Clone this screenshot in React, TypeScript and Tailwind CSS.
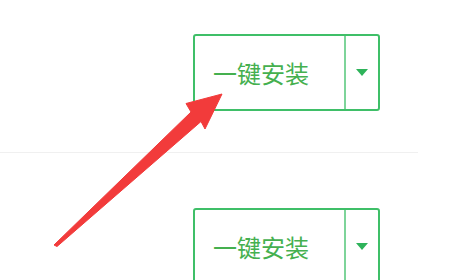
import React from "react";

function InstallButton() {
  return (
    <div className="flex h-[77px] w-[187px] rounded-[3px] border-2 border-[#3fbf68] bg-white">
      <div className="flex w-[149px] items-center pl-[18px]">
        <span
          className="text-[24px] leading-none text-[#45b04f]"
          style={{ fontFamily: '"Noto Sans CJK SC", "Noto Sans", sans-serif' }}
        >
          一键安装
        </span>
      </div>
      <div className="flex flex-1 items-center justify-center border-l-2 border-[#7ed49a]">
        <div className="h-0 w-0 border-x-[6px] border-t-[7px] border-x-transparent border-t-[#2eb35a]" />
      </div>
    </div>
  );
}

export default function App() {
  return (
    <div className="relative h-[280px] w-[450px] overflow-hidden bg-white">
      <div className="flex flex-col">
        <div className="flex justify-end pr-[70px] pt-[34px]">
          <InstallButton />
        </div>
        <div className="mt-[41px] h-[1px] w-[418px] bg-[#f0f0f0]" />
        <div className="mt-[55px] flex justify-end pr-[70px]">
          <InstallButton />
        </div>
      </div>
      <svg
        className="absolute left-0 top-0"
        width="450"
        height="280"
        viewBox="0 0 450 280"
      >
        <path
          d="M54 245 L191 112 L186 103.5 L222 94 L205 129 L201 121.5 L57 246.5 Z"
          fill="#f23b3b"
          stroke="#f23b3b"
          strokeWidth="1"
          strokeLinejoin="round"
        />
      </svg>
    </div>
  );
}
